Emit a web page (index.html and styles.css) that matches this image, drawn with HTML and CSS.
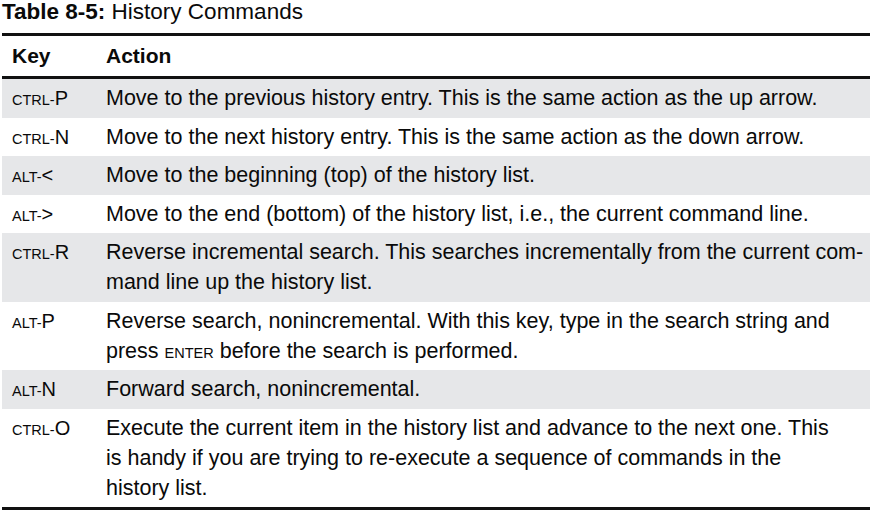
FILE: index.html
```html
<!DOCTYPE html>
<html>
<head>
<meta charset="utf-8">
<link rel="stylesheet" href="styles.css">
</head>
<body>
<div class="page">
  <p class="caption"><b>Table 8-5:</b> History Commands</p>
  <table class="tbl">
    <thead>
      <tr><th class="key">Key</th><th class="act">Action</th></tr>
    </thead>
    <tbody>
      <tr class="g"><td class="key"><span class="sc">ctrl-</span>P</td><td class="act">Move to the previous history entry. This is the same action as the up arrow.</td></tr>
      <tr><td class="key"><span class="sc">ctrl-</span>N</td><td class="act">Move to the next history entry. This is the same action as the down arrow.</td></tr>
      <tr class="g"><td class="key"><span class="sc">alt-</span>&lt;</td><td class="act">Move to the beginning (top) of the history list.</td></tr>
      <tr><td class="key"><span class="sc">alt-</span>&gt;</td><td class="act">Move to the end (bottom) of the history list, i.e., the current command line.</td></tr>
      <tr class="g"><td class="key"><span class="sc">ctrl-</span>R</td><td class="act">Reverse incremental search. This searches incrementally from the current com-<br>mand line up the history list.</td></tr>
      <tr><td class="key"><span class="sc">alt-</span>P</td><td class="act">Reverse search, nonincremental. With this key, type in the search string and<br>press <span class="sc">enter</span> before the search is performed.</td></tr>
      <tr class="g"><td class="key"><span class="sc">alt-</span>N</td><td class="act">Forward search, nonincremental.</td></tr>
      <tr><td class="key"><span class="sc">ctrl-</span>O</td><td class="act">Execute the current item in the history list and advance to the next one. This<br>is handy if you are trying to re-execute a sequence of commands in the<br>history list.</td></tr>
    </tbody>
  </table>
</div>
</body>
</html>
```
FILE: styles.css
```css
html, body {
  margin: 0;
  padding: 0;
  background: #fff;
}
body {
  font-family: "Liberation Sans", Arial, sans-serif;
  color: #0a0a0a;
}
.page {
  padding: 0 3px 0 2px;
}
.caption {
  margin: 0;
  font-size: 22.5px;
  line-height: 24px;
  height: 33px;
}
.caption b {
  font-weight: 700;
}
.tbl {
  width: 868px;
  border-collapse: collapse;
  border-top: 3px solid #111;
  border-bottom: 3px solid #111;
  font-size: 21.5px;
}
.tbl th {
  text-align: left;
  font-weight: 700;
  font-size: 21px;
  height: 40px;
  padding: 0 0 0 10px;
  border-bottom: 3px solid #111;
  vertical-align: middle;
}
.tbl td {
  padding: 4px 0 4.5px 10px;
  line-height: 30px;
  vertical-align: top;
  white-space: nowrap;
}
.tbl td.key {
  font-size: 20px;
}
.tbl .key {
  width: 84px;
}
.tbl tr.g td {
  background: #e6e7e9;
}
.sc {
  text-transform: uppercase;
  font-size: 14.5px;
  line-height: 1;
}
```
